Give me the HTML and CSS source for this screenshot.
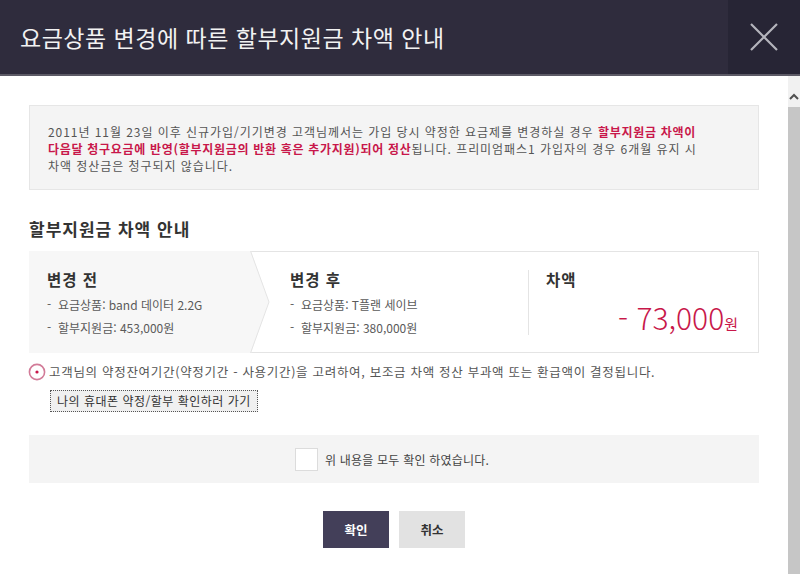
FILE: index.html
```html
<!DOCTYPE html>
<html lang="ko">
<head>
<meta charset="utf-8">
<title>요금상품 변경에 따른 할부지원금 차액 안내</title>
<link rel="stylesheet" href="styles.css">
</head>
<body>
<div class="popup">
  <header class="header">
    <h1 class="title">요금상품 변경에 따른 할부지원금 차액 안내</h1>
    <button class="close" aria-label="닫기">
      <svg width="30" height="30" viewBox="0 0 30 30"><path d="M2 2 L28 28 M28 2 L2 28" stroke="#b4b4bc" stroke-width="2.2" fill="none"/></svg>
    </button>
  </header>
  <div class="body">
    <div class="content">
      <div class="info">
        2011년 11월 23일 이후 신규가입/기기변경 고객님께서는 가입 당시 약정한 요금제를 변경하실 경우 <b class="red">할부지원금 차액이<br>다음달 청구요금에 반영(할부지원금의 반환 혹은 추가지원)되어 정산</b>됩니다. 프리미엄패스1 가입자의 경우 6개월 유지 시<br>차액 정산금은 청구되지 않습니다.
      </div>
      <h2 class="sec-title">할부지원금 차액 안내</h2>
      <div class="table">
        <div class="col before">
          <div class="col-title">변경 전</div>
          <ul class="list">
            <li>요금상품: band 데이터 2.2G</li>
            <li>할부지원금: 453,000원</li>
          </ul>
          <svg class="arrow" width="20" height="102" viewBox="0 0 20 102" preserveAspectRatio="none"><polygon points="0,0 1,0 19,51 1,102 0,102" fill="#f7f7f7"/><polyline points="0.5,0 19,51 0.5,102" fill="none" stroke="#e4e4e4" stroke-width="1"/></svg>
        </div>
        <div class="col after">
          <div class="col-title">변경 후</div>
          <ul class="list">
            <li>요금상품: T플랜 세이브</li>
            <li>할부지원금: 380,000원</li>
          </ul>
        </div>
        <div class="col diff">
          <div class="col-title">차액</div>
          <div class="amount">- 73,000<span class="won">원</span></div>
        </div>
      </div>
      <p class="notice">
        <svg class="notice-icon" width="18" height="18" viewBox="0 0 18 18"><circle cx="9" cy="9" r="7.6" fill="none" stroke="#d27b98" stroke-width="1.6"/><circle cx="9" cy="9" r="1.6" fill="#c8174a"/></svg>
        고객님의 약정잔여기간(약정기간 - 사용기간)을 고려하여, 보조금 차액 정산 부과액 또는 환급액이 결정됩니다.
      </p>
      <button class="link-btn">나의 휴대폰 약정/할부 확인하러 가기</button>
      <div class="agree">
        <span class="check"></span>
        <span class="agree-text">위 내용을 모두 확인 하였습니다.</span>
      </div>
      <div class="actions">
        <button class="btn ok">확인</button>
        <button class="btn cancel">취소</button>
      </div>
    </div>
    <div class="scrollbar">
      <div class="sb-up">
        <svg width="12" height="8" viewBox="0 0 12 8"><path d="M2 6 L6 2 L10 6" stroke="#505050" stroke-width="2" fill="none"/></svg>
      </div>
      <div class="sb-thumb"></div>
    </div>
  </div>
</div>
</body>
</html>
```

FILE: styles.css
```css
* { box-sizing: border-box; }
html, body { margin: 0; padding: 0; }
body {
  width: 800px;
  height: 574px;
  overflow: hidden;
  background: #fff;
  font-family: "Noto Sans CJK KR", "Noto Sans", sans-serif;
  color: #555;
}
.popup { display: flex; flex-direction: column; height: 574px; }

.header {
  height: 76px;
  flex: none;
  display: flex;
  align-items: stretch;
  background: #2f2c3d;
  border-bottom: 2px solid #5c5a66;
}
.title {
  flex: 1;
  margin: 0;
  padding-left: 20px;
  display: flex;
  align-items: center;
  font-size: 23px;
  font-weight: 400;
  color: #f2f2f2;
  letter-spacing: 0.5px;
}
.close {
  width: 72px;
  border: 0;
  padding: 0;
  background: #272535;
  display: flex;
  align-items: center;
  justify-content: center;
}

.body { flex: 1; display: flex; min-height: 0; }
.content { flex: 1; padding: 29px 29px 0 29px; }

.info {
  height: 85px;
  background: #f4f4f4;
  border: 1px solid #e6e6e6;
  padding: 17px 10px 0 18px;
  font-size: 12px;
  line-height: 17px;
  color: #555;
  letter-spacing: 0.95px;
  white-space: nowrap;
}
.red { color: #c8174a; font-weight: 700; letter-spacing: 0.7px; }

.sec-title {
  margin: 0;
  padding-top: 27px;
  height: 61px;
  font-size: 17px;
  line-height: 24px;
  font-weight: 700;
  color: #333;
  letter-spacing: 1px;
}

.table {
  height: 102px;
  border: 1px solid #e4e4e4;
  display: flex;
}
.col { position: relative; padding: 16px 0 0 0; }
.col-title {
  font-size: 15.5px;
  font-weight: 700;
  color: #333;
  line-height: 22px;
  margin-bottom: 3px;
  letter-spacing: 1px;
}
.list { list-style: none; margin: 0; padding: 0; }
.list li {
  font-size: 12px;
  line-height: 23px;
  color: #5a5a5a;
  padding-left: 11px;
  position: relative;
}
.list li::before { content: "-"; position: absolute; left: 0; top: -1px; }

.before { width: 221px; background: #f7f7f7; padding-left: 18px; margin-top: -1px; margin-bottom: -1px; margin-left: -1px; padding-top: 17px; }
.arrow { position: absolute; left: 221px; top: 0; height: 102px; }
.after { width: 278px; padding-left: 40px; }
.diff {
  flex: 1;
  margin: 18px 0 17px 0;
  padding: 0 20px 0 17px;
  border-left: 1px solid #e4e4e4;
  display: flex;
  flex-direction: column;
}
.diff .col-title { margin-top: -2px; }
.amount {
  text-align: right;
  font-size: 30px;
  line-height: 36px;
  font-weight: 300;
  color: #c8174a;
  margin-top: 6px;
}
.won { font-size: 15px; font-weight: 400; }

.notice {
  margin: 8px 0 0 -1px;
  display: flex;
  align-items: center;
  gap: 3px;
  font-size: 12.5px;
  line-height: 22px;
  color: #555;
  letter-spacing: 0.7px;
  white-space: nowrap;
}
.notice-icon { flex: none; }

.link-btn {
  display: block;
  margin: 7px 0 0 21px;
  height: 22px;
  padding: 0 6px;
  border: 1px dotted #555;
  background: #f0f0f0;
  font-family: inherit;
  font-size: 12px;
  color: #333;
  line-height: 18px;
  letter-spacing: 0.5px;
}

.agree {
  margin-top: 23px;
  height: 48px;
  background: #f4f4f4;
  display: flex;
  align-items: center;
  justify-content: center;
  gap: 7px;
  padding-right: 4px;
}
.check {
  width: 23px;
  height: 23px;
  background: #fff;
  border: 1px solid #dcdcdc;
}
.agree-text { font-size: 12px; color: #444; letter-spacing: 0.2px; }

.actions {
  margin-top: 28px;
  display: flex;
  justify-content: center;
  gap: 10px;
}
.btn {
  width: 66px;
  height: 37px;
  border: 0;
  font-family: inherit;
  font-size: 12.5px;
  font-weight: 700;
}
.ok { background: #433f59; color: #fff; }
.cancel { background: #e2e2e2; color: #333; }

.scrollbar {
  width: 12px;
  flex: none;
  display: flex;
  flex-direction: column;
  background: #f1f1f1;
}
.sb-up { height: 31px; display: flex; align-items: flex-end; justify-content: center; padding-bottom: 6px; }
.sb-thumb { flex: 1; background: #c6c6c6; }
```
